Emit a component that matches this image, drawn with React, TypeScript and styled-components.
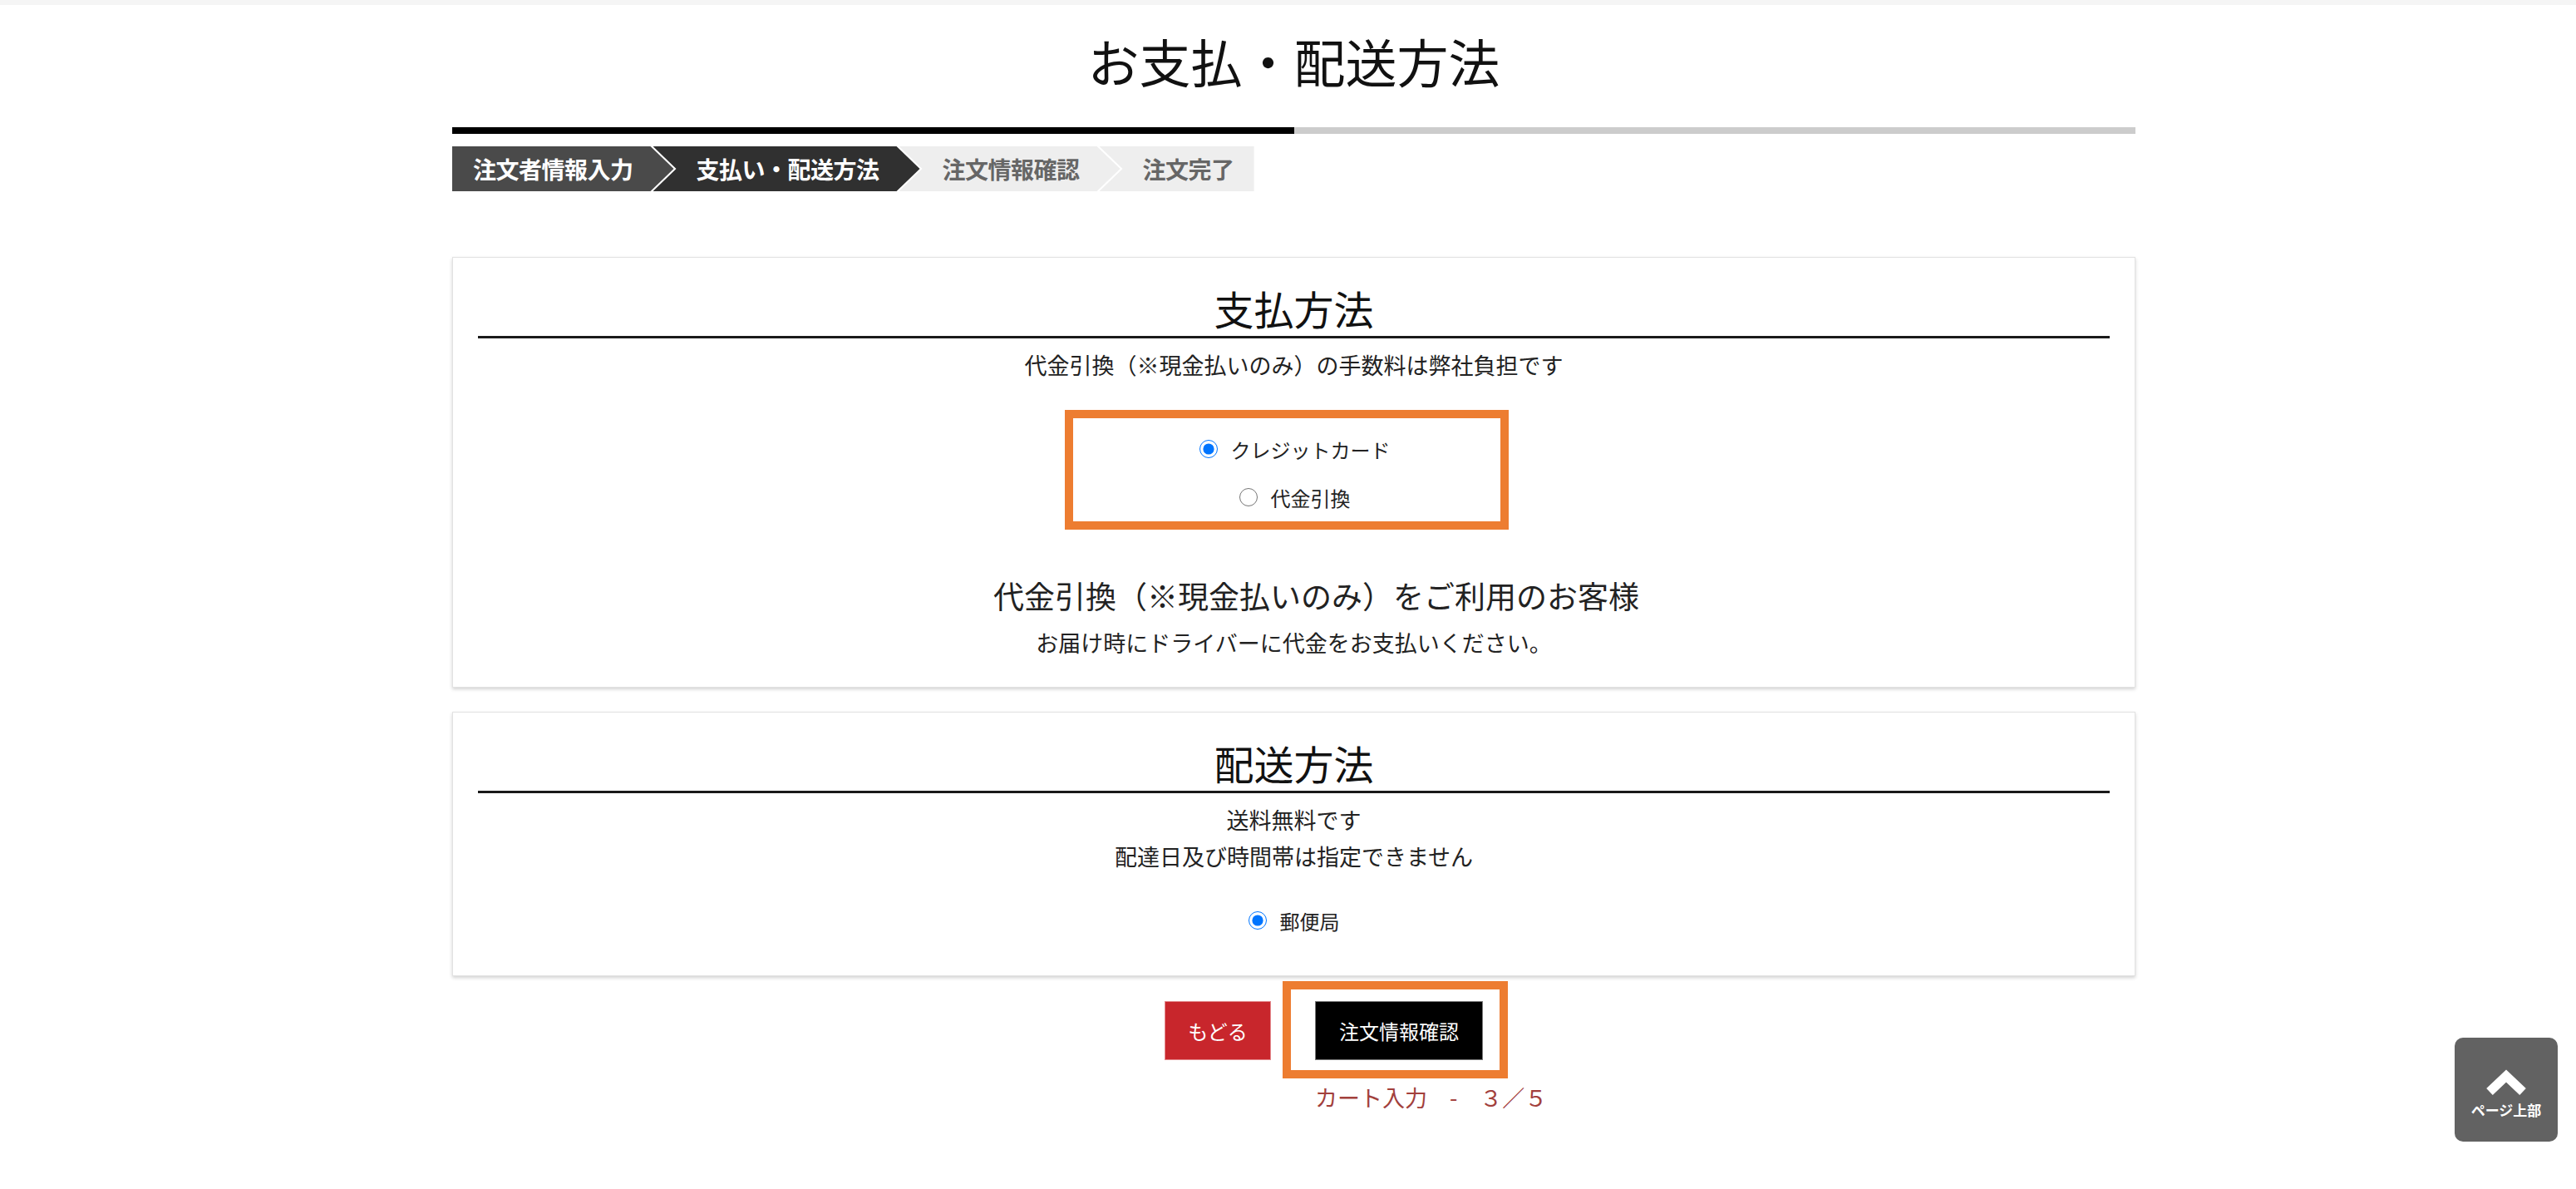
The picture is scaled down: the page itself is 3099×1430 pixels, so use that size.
import styled, { createGlobalStyle } from 'styled-components';

const GlobalStyle = createGlobalStyle`
  html, body {
    margin: 0;
    padding: 0;
    background: #fff;
  }
  body {
    font-family: "Noto Sans CJK JP", "Noto Sans", sans-serif;
    color: #222;
  }
  * {
    box-sizing: border-box;
  }
`;

type Tone = 'done' | 'current' | 'todo';

const steps: { label: string; tone: Tone }[] = [
  { label: '注文者情報入力', tone: 'done' },
  { label: '支払い・配送方法', tone: 'current' },
  { label: '注文情報確認', tone: 'todo' },
  { label: '注文完了', tone: 'todo' },
];

const DEPTH = 28;

const stepColors: Record<Tone, { bg: string; fg: string }> = {
  done: { bg: '#4a4a4a', fg: '#fff' },
  current: { bg: '#303030', fg: '#fff' },
  todo: { bg: '#eeeeee', fg: '#666' },
};

const TopStrip = styled.div`
  height: 6px;
  background: #f5f5f5;
`;

const Page = styled.main`
  padding-left: 14px;
  padding-bottom: 80px;
`;

const PageTitle = styled.h1`
  margin: 30px 0 0;
  font-size: 62px;
  font-weight: 400;
  line-height: 74px;
  text-align: center;
  color: #111;
`;

const Container = styled.div`
  width: 2025px;
  margin: 0 auto;
`;

const Progress = styled.div`
  display: flex;
  height: 8px;
  margin-top: 43px;
`;

const ProgressPart = styled.div<{ $done?: boolean }>`
  flex: 1;
  background: ${({ $done }) => ($done ? '#000' : '#cccccc')};
`;

const StepList = styled.ol`
  display: flex;
  list-style: none;
  margin: 15px 0 0;
  padding: 0;
`;

const Step = styled.li<{ $tone: Tone; $first?: boolean; $last?: boolean }>`
  height: 54px;
  display: flex;
  align-items: center;
  white-space: nowrap;
  font-size: 28px;
  font-weight: 700;
  letter-spacing: -0.5px;
  background: ${({ $tone }) => stepColors[$tone].bg};
  color: ${({ $tone }) => stepColors[$tone].fg};
  padding: ${({ $first, $last }) => `0 ${$last ? 24 : 49}px 0 ${$first ? 25 : 52}px`};
  margin-left: ${({ $first }) => ($first ? 0 : -(DEPTH - 3))}px;
  clip-path: ${({ $first, $last }) => {
    if ($first) {
      return `polygon(0 0, calc(100% - ${DEPTH}px) 0, 100% 50%, calc(100% - ${DEPTH}px) 100%, 0 100%)`;
    }
    if ($last) {
      return `polygon(0 0, 100% 0, 100% 100%, 0 100%, ${DEPTH}px 50%)`;
    }
    return `polygon(0 0, calc(100% - ${DEPTH}px) 0, 100% 50%, calc(100% - ${DEPTH}px) 100%, 0 100%, ${DEPTH}px 50%)`;
  }};
`;

const Card = styled.section<{ $first?: boolean }>`
  margin-top: ${({ $first }) => ($first ? 79 : 29)}px;
  padding: 27px 30px ${({ $first }) => ($first ? 31 : 37)}px;
  background: #fff;
  border: 1px solid #e2e2e2;
  box-shadow: 0 2px 4px rgba(0, 0, 0, 0.18);
  text-align: center;
`;

const CardTitle = styled.h2`
  margin: 0;
  font-size: 48px;
  font-weight: 400;
  line-height: 67px;
  color: #111;
  border-bottom: 3px solid #1a1a1a;
`;

const Note = styled.p<{ $gap?: number }>`
  margin: ${({ $gap }) => $gap ?? 10}px 0 0;
  font-size: 27px;
  line-height: 44px;
  color: #222;
`;

const SubTitle = styled.p`
  margin: 52px 0 0;
  padding-left: 54px;
  font-size: 37px;
  line-height: 54px;
  color: #222;
`;

// orange annotation frame around the payment choices
const Highlight = styled.div`
  width: 534px;
  height: 144px;
  margin: 32px 0 0 calc(50% - 276px);
  padding: 8px 0 0 20px;
  border: 10px solid #ed7d31;
`;

const RadioRow = styled.label<{ $gap?: number }>`
  display: flex;
  align-items: center;
  justify-content: center;
  gap: 16px;
  height: 58px;
  margin-top: ${({ $gap }) => $gap ?? 0}px;
  cursor: pointer;
`;

const Radio = styled.input`
  width: 22px;
  height: 22px;
  margin: 0;
  accent-color: #0075ff;
`;

const RadioLabel = styled.span`
  font-size: 24px;
  color: #222;
`;

const ButtonRow = styled.div`
  display: flex;
  justify-content: center;
  align-items: flex-start;
  gap: 14px;
  margin-top: 6px;
  padding-left: 102px;
`;

const BackButton = styled.button`
  width: 128px;
  height: 71px;
  margin-top: 24px;
  border: 1px solid #e48a8d;
  background: #c8262c;
  color: #fff;
  font-family: inherit;
  font-size: 24px;
  cursor: pointer;
`;

const ConfirmColumn = styled.div`
  display: flex;
  flex-direction: column;
  align-items: flex-start;
`;

const ButtonHighlight = styled.div`
  width: 271px;
  padding: 14px 20px 12px 29px;
  border: 10px solid #ed7d31;
`;

const ConfirmButton = styled.button`
  display: block;
  width: 202px;
  height: 71px;
  border: 1px solid #7a7a7a;
  background: #000;
  color: #fff;
  font-family: inherit;
  font-size: 24px;
  cursor: pointer;
`;

const Caption = styled.p`
  width: 0;
  margin: 3px 0 0;
  padding-left: 39px;
  white-space: nowrap;
  font-size: 27px;
  line-height: 40px;
  color: #a2403c;
`;

const PageTop = styled.button`
  position: fixed;
  right: 22px;
  bottom: 57px;
  width: 124px;
  height: 125px;
  border: none;
  border-radius: 10px;
  background: #626262;
  color: #fff;
  display: flex;
  flex-direction: column;
  align-items: center;
  justify-content: center;
  gap: 6px;
  padding: 8px 0 0;
  font-family: inherit;
  cursor: pointer;
`;

const PageTopText = styled.span`
  font-size: 17px;
  font-weight: 700;
  line-height: 20px;
`;

const App: React.FC = () => {
  return (
    <>
      <GlobalStyle />
      <TopStrip />
      <Page>
        <PageTitle>お支払・配送方法</PageTitle>
        <Container>
          <Progress>
            <ProgressPart $done />
            <ProgressPart />
          </Progress>

          <StepList>
            {steps.map((step, i) => (
              <Step key={step.label} $tone={step.tone} $first={i === 0} $last={i === steps.length - 1}>
                {step.label}
              </Step>
            ))}
          </StepList>

          <Card $first>
            <CardTitle>支払方法</CardTitle>
            <Note>代金引換（※現金払いのみ）の手数料は弊社負担です</Note>
            <Highlight>
              <RadioRow>
                <Radio type="radio" name="payment" defaultChecked />
                <RadioLabel>クレジットカード</RadioLabel>
              </RadioRow>
              <RadioRow>
                <Radio type="radio" name="payment" />
                <RadioLabel>代金引換</RadioLabel>
              </RadioRow>
            </Highlight>
            <SubTitle>代金引換（※現金払いのみ）をご利用のお客様</SubTitle>
            <Note $gap={8}>お届け時にドライバーに代金をお支払いください。</Note>
          </Card>

          <Card>
            <CardTitle>配送方法</CardTitle>
            <Note>送料無料です</Note>
            <Note $gap={0}>配達日及び時間帯は指定できません</Note>
            <RadioRow $gap={26}>
              <Radio type="radio" name="delivery" defaultChecked />
              <RadioLabel>郵便局</RadioLabel>
            </RadioRow>
          </Card>

          <ButtonRow>
            <BackButton type="button">もどる</BackButton>
            <ConfirmColumn>
              <ButtonHighlight>
                <ConfirmButton type="button">注文情報確認</ConfirmButton>
              </ButtonHighlight>
              <Caption>カート入力　-　３／５</Caption>
            </ConfirmColumn>
          </ButtonRow>
        </Container>
      </Page>

      <PageTop type="button" aria-label="ページ上部">
        <svg width="52" height="34" viewBox="0 0 52 34">
          <polyline points="6,28 26,9 46,28" fill="none" stroke="#fff" strokeWidth="11" strokeLinejoin="miter" />
        </svg>
        <PageTopText>ページ上部</PageTopText>
      </PageTop>
    </>
  );
};

export default App;
